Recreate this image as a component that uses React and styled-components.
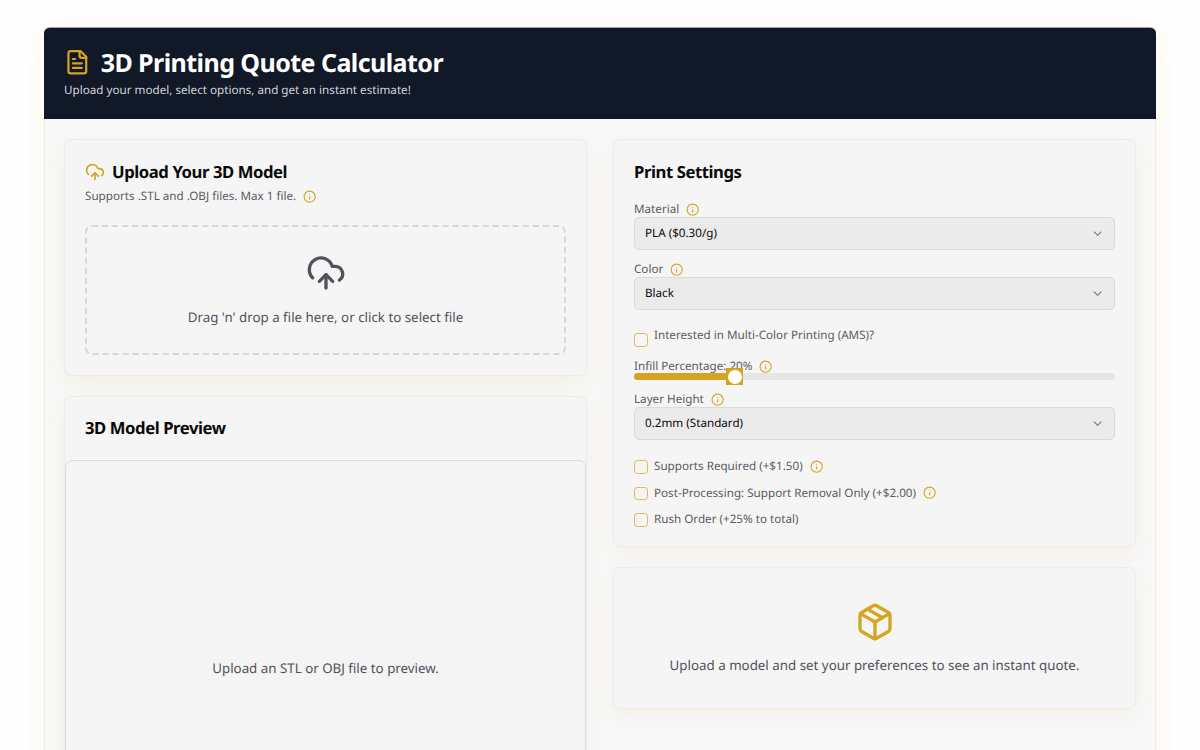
import React, { useState } from "react";
import styled, { createGlobalStyle } from "styled-components";

const GlobalStyle = createGlobalStyle`
  * {
    box-sizing: border-box;
  }

  body {
    margin: 0;
    background: #fefefe;
    color: #0a0a0a;
    font-family: "Noto Sans", sans-serif;
    font-size: 13.333px;
    text-rendering: geometricPrecision;
  }

  h1, h2, p {
    margin: 0;
  }

  svg {
    display: block;
    flex-shrink: 0;
  }
`;

const Page = styled.main`
  height: 750px;
  padding: 27px 44px 0;
  overflow: hidden;
`;

const Calculator = styled.div`
  height: 900px;
  border: 1px solid #eeebed;
  border-radius: 7px;
  background: #f8f8f8;
  box-shadow: 0 7px 26px rgba(218, 165, 32, 0.11);
`;

const Header = styled.header`
  height: 92px;
  margin: -1px -1px 0;
  padding: 19px 20px 0;
  border: 1px solid #a0a3aa;
  border-width: 1px 0 0;
  border-radius: 6px 6px 0 0;
  background: #111827;
  color: #fff;
`;

const HeaderTitle = styled.div`
  display: flex;
  align-items: center;
  gap: 10px;
  height: 30px;
`;

const Heading = styled.h1`
  padding-top: 2px;
  font-size: 25px;
  font-weight: 700;
  line-height: 30px;
  letter-spacing: -0.56px;
`;

const Subtitle = styled.p`
  margin-top: 5px;
  color: #d1d5db;
  font-size: 11.667px;
  line-height: 17px;
`;

const Content = styled.div`
  display: grid;
  grid-template-columns: 523px 1fr;
  gap: 26px;
  padding: 20px 19px;
`;

const Column = styled.div`
  display: flex;
  flex-direction: column;
  gap: 20px;
`;

const Card = styled.section`
  height: ${(props) => props.$height}px;
  padding: ${(props) => (props.$flush ? "0" : "20px")};
  border: 1px solid #ececec;
  border-radius: 7px;
  background: #f5f5f5;
  box-shadow: 0 7px 20px rgba(218, 165, 32, 0.09);
`;

const CardTitle = styled.h2`
  display: flex;
  align-items: center;
  gap: 7px;
  height: 24px;
  padding-bottom: 2px;
  font-size: 16.667px;
  font-weight: 700;
  letter-spacing: -0.42px;

  svg {
    margin-top: 2px;
  }
`;

const PreviewTitle = styled(CardTitle)`
  height: 63px;
  padding: 0 20px 2px;
`;

const Label = styled.div`
  display: flex;
  align-items: center;
  gap: 7px;
  height: ${(props) => props.$height || 17}px;
  padding-top: ${(props) => props.$top || 0}px;
  color: #5b5b64;
  font-size: 11.667px;
  line-height: 17px;
`;

const DropZone = styled.div`
  display: flex;
  flex-direction: column;
  align-items: center;
  height: 130px;
  margin-top: 16px;
  padding-top: 26px;
  border: 2px dashed #d8d8d8;
  border-radius: 7px;
  color: #52525b;
`;

const Message = styled.p`
  margin-top: ${(props) => props.$top || 0}px;
  color: #52525b;
  font-size: 13.333px;
  line-height: 20px;
`;

const Viewer = styled.div`
  display: flex;
  align-items: center;
  justify-content: center;
  height: 416px;
  border: 1px solid #dcdcde;
  border-radius: 7px;
  background: #f4f4f4;
`;

const Field = styled.div`
  margin-top: ${(props) => props.$top}px;
`;

const SelectBox = styled.button`
  display: flex;
  align-items: center;
  justify-content: space-between;
  width: 100%;
  height: 33px;
  padding: 0 10px;
  border: 1px solid #dadada;
  border-radius: 5px;
  background: #ebebeb;
  color: #0a0a0a;
  font-family: inherit;
  font-size: 11.667px;
  text-align: left;
  text-rendering: inherit;
`;

const CheckRow = styled.label`
  display: flex;
  align-items: center;
  gap: 6.5px;
  height: 17px;
  margin-top: ${(props) => props.$top}px;
`;

const CheckBox = styled.input`
  appearance: none;
  flex-shrink: 0;
  width: 13.5px;
  height: 13.5px;
  margin: ${(props) => (props.$low ? "9px" : "1px")} 0 0;
  border: 1px solid #e0b65a;
  border-radius: 3.5px;

  &:checked {
    background: #daa520;
  }
`;

const Track = styled.div`
  display: flex;
  align-items: center;
  height: 7px;
  border-radius: 4px;
  background: #e6e6e6;
`;

const Range = styled.div`
  height: 7px;
  border-radius: 4px 0 0 4px;
  background: #d4a41e;
`;

const Thumb = styled.div`
  position: relative;
  flex-shrink: 0;
  width: 17px;
  height: 17px;
  margin-left: -9px;
  padding: 1.5px;
  background: #d4a41e;

  &::before {
    content: "";
    display: block;
    width: 14px;
    height: 14px;
    border-radius: 50%;
    background: #fff;
  }
`;

const InfoMark = styled.span`
  padding-top: ${(props) => props.$drop}px;
`;

const QuoteCard = styled(Card)`
  display: flex;
  flex-direction: column;
  align-items: center;
  padding-top: 33.5px;
`;

function Icon({ size, color = "#d4a520", children }) {
  return (
    <svg
      width={size}
      height={size}
      viewBox="0 0 24 24"
      fill="none"
      stroke={color}
      strokeWidth="2"
      strokeLinecap="round"
      strokeLinejoin="round"
    >
      {children}
    </svg>
  );
}

function FileIcon() {
  return (
    <Icon size={26.667}>
      <path d="M15 2H6a2 2 0 0 0-2 2v16a2 2 0 0 0 2 2h12a2 2 0 0 0 2-2V7Z" />
      <path d="M14 2v4a2 2 0 0 0 2 2h4" />
      <path d="M10 9H8" />
      <path d="M16 13H8" />
      <path d="M16 17H8" />
    </Icon>
  );
}

function UploadIcon({ size, color }) {
  return (
    <Icon size={size} color={color}>
      <path d="M12 13v8" />
      <path d="M4 14.899A7 7 0 1 1 15.71 8h1.79a4.5 4.5 0 0 1 2.5 8.242" />
      <path d="m8 17 4-4 4 4" />
    </Icon>
  );
}

function InfoIcon({ drop = 0 }) {
  return (
    <InfoMark $drop={drop}>
      <Icon size={13.333}>
        <circle cx="12" cy="12" r="10" />
        <path d="M12 16v-4" />
        <path d="M12 8h.01" />
      </Icon>
    </InfoMark>
  );
}

function PackageIcon() {
  return (
    <Icon size={40}>
      <path d="m7.5 4.27 9 5.15" />
      <path d="M21 8a2 2 0 0 0-1-1.73l-7-4a2 2 0 0 0-2 0l-7 4A2 2 0 0 0 3 8v8a2 2 0 0 0 1 1.73l7 4a2 2 0 0 0 2 0l7-4A2 2 0 0 0 21 16Z" />
      <path d="m3.3 7 8.7 5 8.7-5" />
      <path d="M12 22V12" />
    </Icon>
  );
}

function Select({ label, value, top }) {
  return (
    <Field $top={top}>
      <Label $height={16}>
        {label} <InfoIcon drop={2} />
      </Label>
      <SelectBox type="button">
        {value}
        <Icon size={13.333} color="#808080">
          <path d="m6 9 6 6 6-6" />
        </Icon>
      </SelectBox>
    </Field>
  );
}

function Check({ label, top, info, low }) {
  const [checked, setChecked] = useState(false);

  return (
    <CheckRow $top={top}>
      <CheckBox
        type="checkbox"
        $low={low}
        checked={checked}
        onChange={(e) => setChecked(e.target.checked)}
      />
      <Label as="span">
        {label} {info && <InfoIcon />}
      </Label>
    </CheckRow>
  );
}

function App() {
  const [infill] = useState(20);

  return (
    <Page>
      <GlobalStyle />
      <Calculator>
        <Header>
          <HeaderTitle>
            <FileIcon />
            <Heading>3D Printing Quote Calculator</Heading>
          </HeaderTitle>
          <Subtitle>Upload your model, select options, and get an instant estimate!</Subtitle>
        </Header>
        <Content>
          <Column>
            <Card $height={237}>
              <CardTitle>
                <UploadIcon size={20} />
                Upload Your 3D Model
              </CardTitle>
              <Label $height={25}>
                Supports .STL and .OBJ files. Max 1 file. <InfoIcon />
              </Label>
              <DropZone>
                <UploadIcon size={40} color="#52525b" />
                <Message $top={14}>Drag 'n' drop a file here, or click to select file</Message>
              </DropZone>
            </Card>
            <Card $height={482} $flush>
              <PreviewTitle>3D Model Preview</PreviewTitle>
              <Viewer>
                <Message>Upload an STL or OBJ file to preview.</Message>
              </Viewer>
            </Card>
          </Column>
          <Column>
            <Card $height={408}>
              <CardTitle>Print Settings</CardTitle>
              <Select label="Material" value="PLA ($0.30/g)" top={17} />
              <Select label="Color" value="Black" top={11} />
              <Check label="Interested in Multi-Color Printing (AMS)?" top={17} low />
              <Field $top={13}>
                <Label $height={16} $top={2}>
                  Infill Percentage: {infill}% <InfoIcon drop={1} />
                </Label>
                <Track>
                  <Range style={{ width: `${infill + 1}%` }} />
                  <Thumb />
                </Track>
              </Field>
              <Select label="Layer Height" value="0.2mm (Standard)" top={11} />
              <Check label="Supports Required (+$1.50)" top={18} info />
              <Check label="Post-Processing: Support Removal Only (+$2.00)" top={9.5} info />
              <Check label="Rush Order (+25% to total)" top={9.5} />
            </Card>
            <QuoteCard $height={142}>
              <PackageIcon />
              <Message $top={13.5}>Upload a model and set your preferences to see an instant quote.</Message>
            </QuoteCard>
          </Column>
        </Content>
      </Calculator>
    </Page>
  );
}

export default App;
